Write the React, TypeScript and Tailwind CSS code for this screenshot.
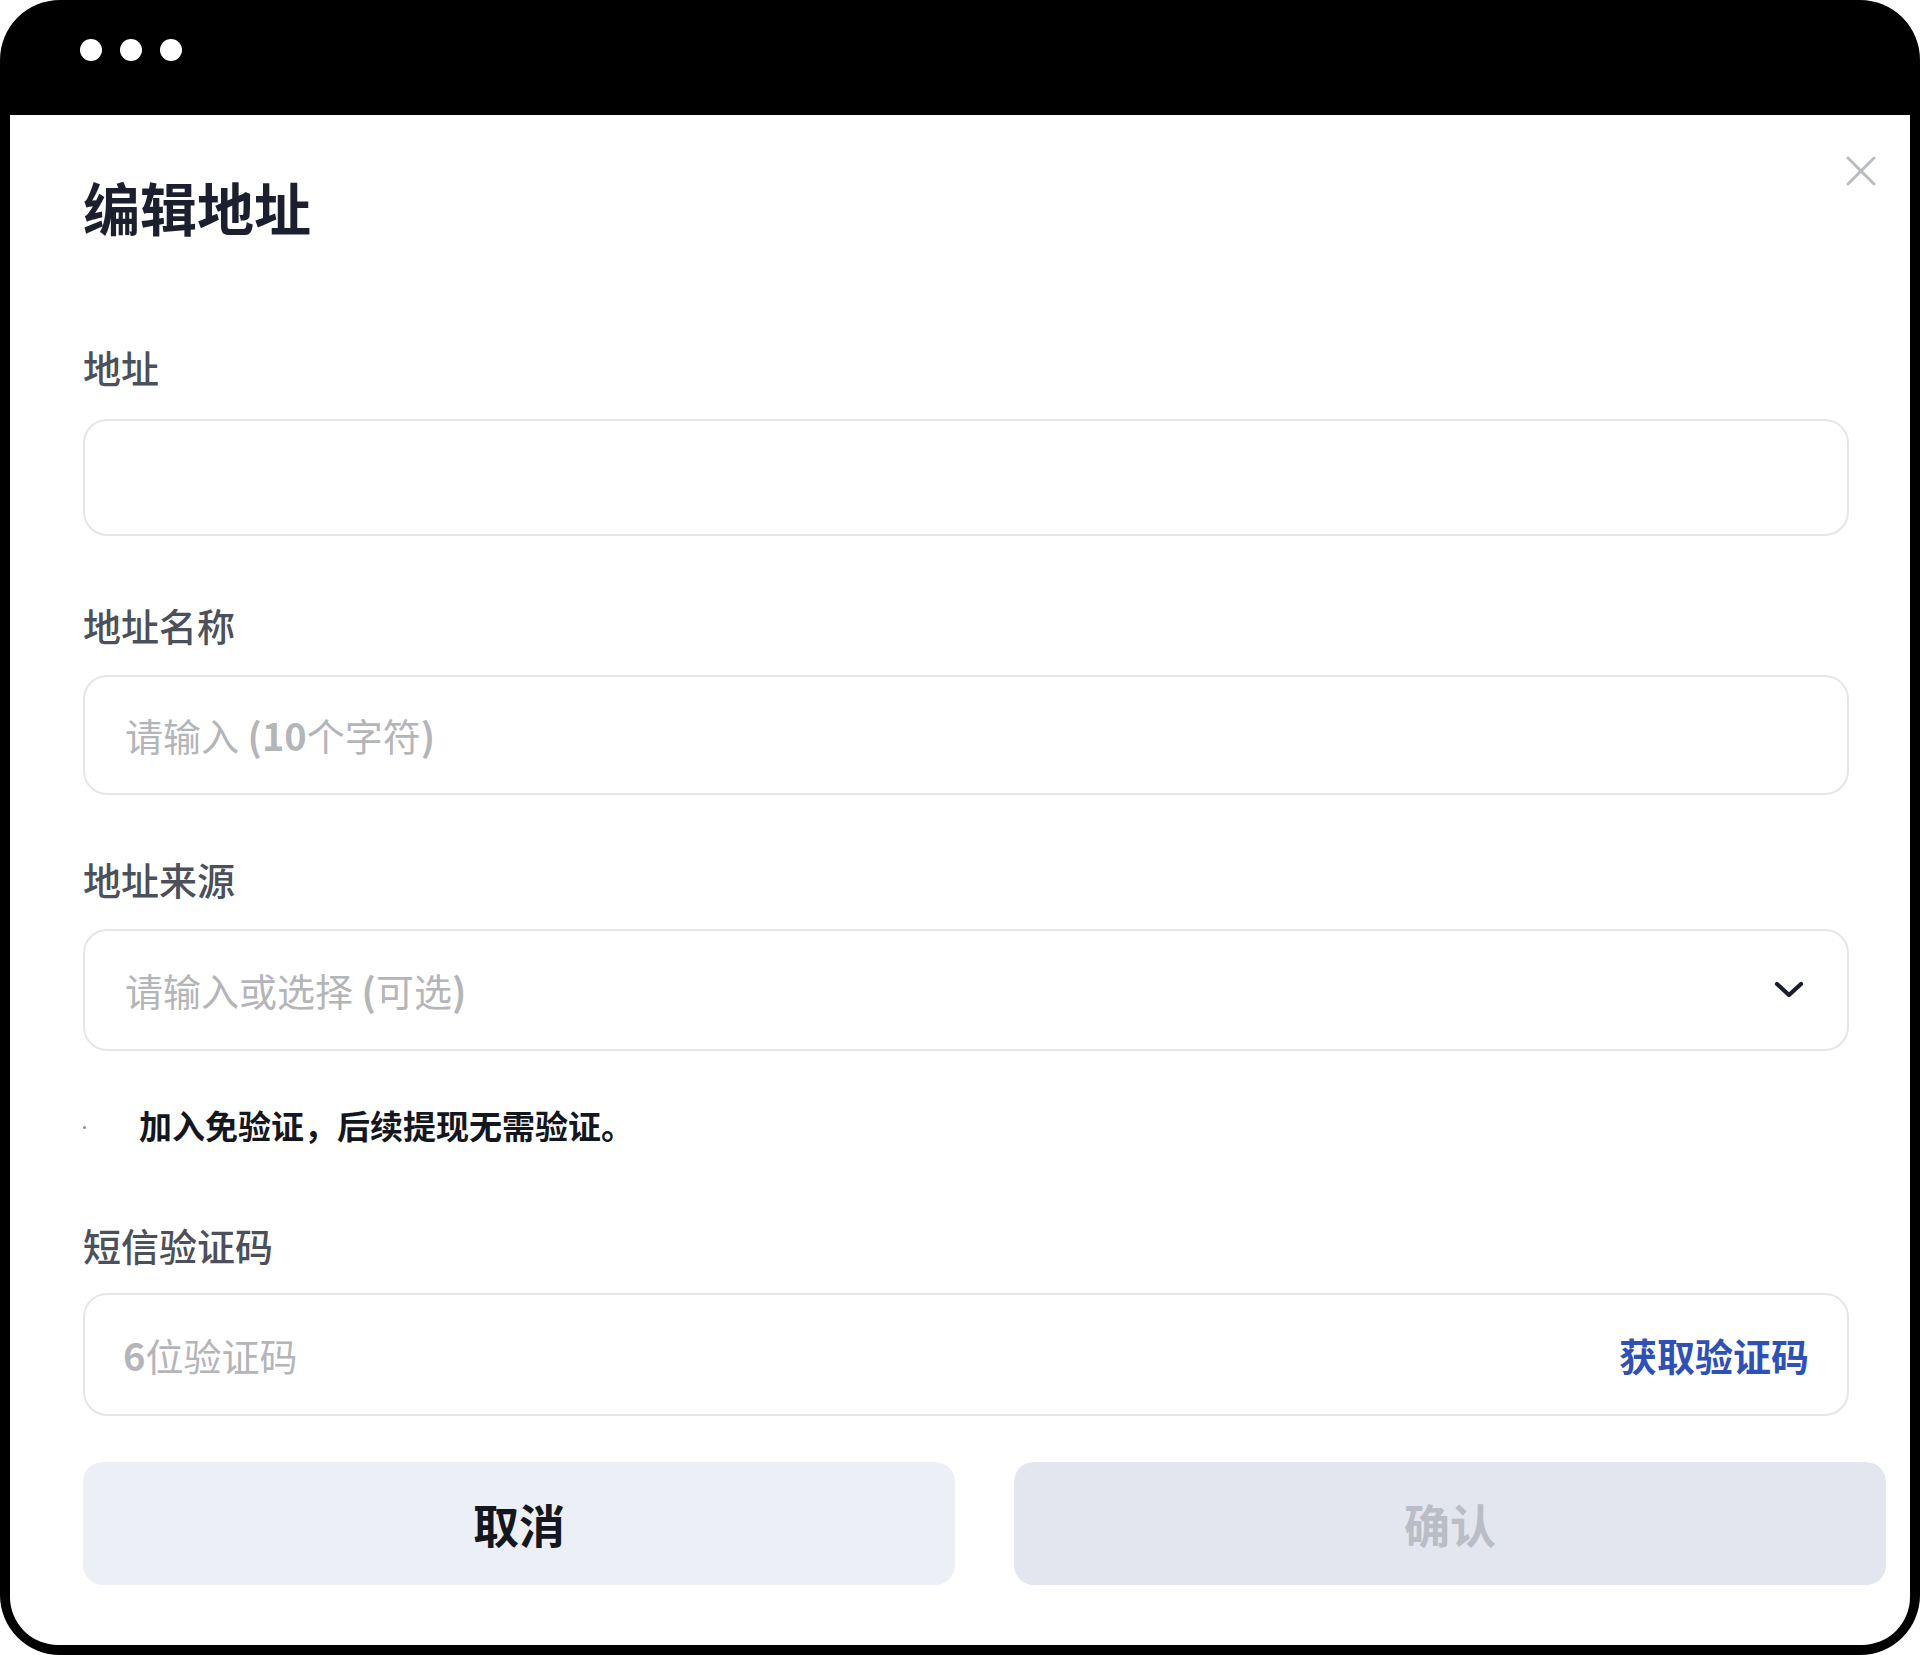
import React from "react";

const font = { fontFamily: '"Noto Sans CJK SC", "Noto Sans", sans-serif' };

function Label({ children, mt }: { children: React.ReactNode; mt: string }) {
  return (
    <div className={`${mt} text-[38px] leading-[38px] font-medium text-[#4b505b]`}>{children}</div>
  );
}

export default function App() {
  return (
    <div className="w-[1920px] h-[1655px] bg-white" style={font}>
      <div className="w-full h-full bg-black rounded-[60px] flex flex-col px-[10px] pb-[10px]">
        <div className="h-[115px] shrink-0 flex items-start pt-[39px] pl-[70px] gap-[18px]">
          <div className="w-[22px] h-[22px] rounded-full bg-white" />
          <div className="w-[22px] h-[22px] rounded-full bg-white" />
          <div className="w-[22px] h-[22px] rounded-full bg-white" />
        </div>
        <div className="flex-1 bg-white rounded-b-[48px] relative pl-[73px] pr-[24px] pt-[62px] flex flex-col">
          <button className="absolute right-[33px] top-[40px] w-[32px] h-[32px] flex items-center justify-center">
            <svg width="32" height="32" viewBox="0 0 32 32" fill="none">
              <path d="M3 3 L29 29 M29 3 L3 29" stroke="#b9bcc3" strokeWidth="3" strokeLinecap="round" />
            </svg>
          </button>
          <div className="text-[57px] leading-[58px] font-bold text-[#1c1f2e]">编辑地址</div>

          <Label mt="mt-[113px]">地址</Label>
          <div className="mt-[33px] w-[1766px] h-[117px] rounded-[24px] border-2 border-[#e4e6eb]" />

          <Label mt="mt-[70px]">地址名称</Label>
          <div className="mt-[31px] w-[1766px] h-[120px] rounded-[24px] border-2 border-[#e4e6eb] flex items-center px-[40px]">
            <span className="text-[38px] leading-none text-[#b4b5b9]">
              请输入 <span className="font-semibold">(10</span>个字符<span className="font-semibold">)</span>
            </span>
          </div>

          <Label mt="mt-[65px]">地址来源</Label>
          <div className="mt-[31px] w-[1766px] h-[122px] rounded-[24px] border-2 border-[#e4e6eb] flex items-center justify-between pl-[40px] pr-[42px]">
            <span className="text-[38px] leading-none text-[#b4b5b9]">
              请输入或选择 <span className="font-semibold">(</span>可选<span className="font-semibold">)</span>
            </span>
            <svg width="32" height="20" viewBox="0 0 32 20" fill="none">
              <path d="M4 4 L16 15 L28 4" stroke="#1a1d2b" strokeWidth="4.2" strokeLinecap="round" strokeLinejoin="round" />
            </svg>
          </div>

          <div className="mt-[58px] flex items-center">
            <div className="w-[3px] h-[3px] mt-[4px] rounded-full bg-[#8a8d94]" />
            <div className="ml-[53px] text-[33px] leading-[33px] font-bold text-[#15171f]">
              加入免验证，后续提现无需验证。
            </div>
          </div>

          <Label mt="mt-[84px]">短信验证码</Label>
          <div className="mt-[29px] w-[1766px] h-[123px] rounded-[24px] border-2 border-[#e4e6eb] flex items-center justify-between pl-[38px] pr-[38px]">
            <span className="text-[38px] leading-none text-[#b4b5b9]">
              <span className="font-semibold">6</span>位验证码
            </span>
            <span className="text-[38px] leading-none font-bold text-[#2f51b6]">获取验证码</span>
          </div>

          <div className="mt-[46px] flex gap-[59px]">
            <button className="w-[872px] h-[123px] rounded-[20px] bg-[#eceff5] text-[46px] font-bold text-[#15171f] flex items-center justify-center">
              取消
            </button>
            <button className="w-[872px] h-[123px] rounded-[20px] bg-[#e3e6ee] text-[46px] font-bold text-[#babdc5] flex items-center justify-center">
              确认
            </button>
          </div>
        </div>
      </div>
    </div>
  );
}
